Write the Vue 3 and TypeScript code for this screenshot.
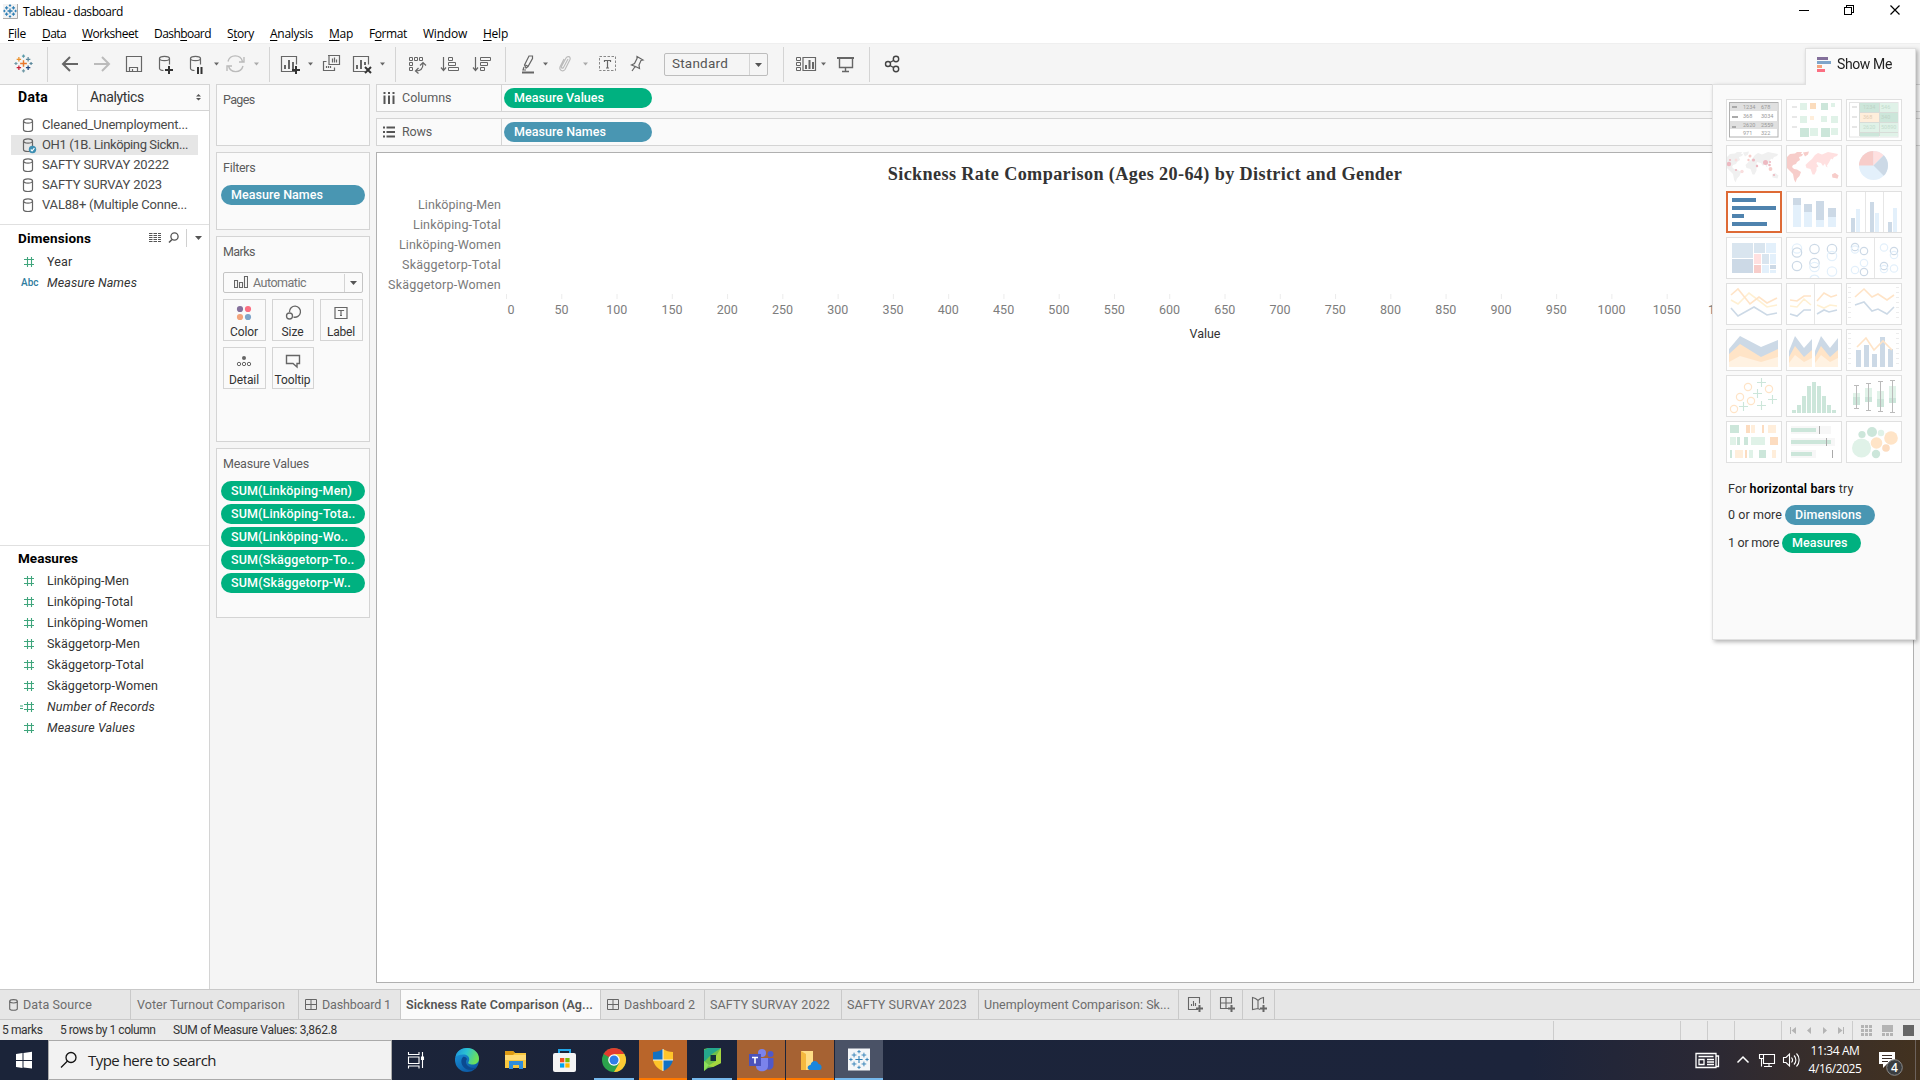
<script setup lang="ts">
type Sized = [string, number]

interface Tool {
  x: number
  w: number
  art: string
}

// Spreads the glyphs of a label so that it takes the given width.
const vFit = {
  mounted(el: HTMLElement, binding: { value: number }) {
    const n = (el.textContent ?? '').length
    const natural = el.getBoundingClientRect().width
    if (n > 1) el.style.letterSpacing = `${((binding.value - natural) / n).toFixed(3)}px`
  },
}

const menus: [string, string, string, number][] = [
  ['', 'F', 'ile', 18], ['', 'D', 'ata', 24], ['', 'W', 'orksheet', 56], ['Dash', 'b', 'oard', 57],
  ['S', 't', 'ory', 27], ['', 'A', 'nalysis', 43], ['', 'M', 'ap', 24], ['F', 'o', 'rmat', 38],
  ['Wi', 'n', 'dow', 44], ['', 'H', 'elp', 25],
]

const caret = (x: number, c = '#666') => `<path d="M${x} 62.500h5l-2.500 3z" fill="${c}"/>`
const plus = (x: number, y: number, c = '#333', s = 4) =>
  `<path d="M${x - s} ${y}h${2 * s}M${x} ${y - s}v${2 * s}" stroke="${c}" stroke-width="2" fill="none"/>`
const line = (d: string, c = '#666', w = 1.2) => `<path d="${d}" stroke="${c}" stroke-width="${w}" fill="none"/>`
const sep = (x: number) => `<path d="M${x + 0.5} 47v35" stroke="#d4d4d4"/>`
const cross = (x: number, y: number, s: number, c: string, w = 1.1) => line(`M${x - s} ${y}h${2 * s}M${x} ${y - s}v${2 * s}`, c, w)

function tableauMark(cx: number, cy: number, k: number, c: string[], w = 1.1) {
  return cross(cx, cy, 3.2 * k, c[0], w * 1.2) +
    cross(cx - 4.4 * k, cy - 4 * k, 2.1 * k, c[1], w) + cross(cx + 4.4 * k, cy - 4 * k, 2.1 * k, c[2], w) +
    cross(cx - 4.4 * k, cy + 4 * k, 2.1 * k, c[3], w) + cross(cx + 4.4 * k, cy + 4 * k, 2.1 * k, c[4], w) +
    cross(cx, cy - 7 * k, 1.5 * k, c[5], w) + cross(cx, cy + 7 * k, 1.5 * k, c[6], w) +
    cross(cx - 7.2 * k, cy, 1.5 * k, c[7], w) + cross(cx + 7.2 * k, cy, 1.5 * k, c[8], w)
}
const blueMark = Array(9).fill('#2f7fb5')
const colourMark = ['#e8762c', '#eb912c', '#5b879b', '#c72035', '#1f447e', '#5b9aa8', '#7099a6', '#7099a6', '#59879b']

const tools: Tool[] = [
  { x: 0, w: 48, art: tableauMark(23.5, 63.5, 1.05, colourMark, 1.2) + sep(47) },
  { x: 48, w: 38, art: line('M78 64H63M70 57l-7 7 7 7', '#666', 2) },
  { x: 86, w: 32, art: line('M94 64h15M102 57l7 7-7 7', '#bbb', 2) },
  { x: 118, w: 32, art: line('M126.500 56.500h15v15h-15zM129.500 71.500v-4h8v4M132.500 71v-2') },
  { x: 150, w: 32, art: line('M159.500 58.500v10c0 1 2 2 4 2M169.500 58.500v6') + '<ellipse cx="164.500" cy="58.500" rx="5" ry="2.200" fill="none" stroke="#666" stroke-width="1.200"/>' + plus(169, 70) },
  { x: 182, w: 40, art: line('M190.500 58.500v10c0 1 2 2 4 2M200.500 58.500v6') + '<ellipse cx="195.500" cy="58.500" rx="5" ry="2.200" fill="none" stroke="#666" stroke-width="1.200"/><path d="M197 67h2v7h-2zM200.500 67h2v7h-2z" fill="#333"/>' + caret(214) },
  { x: 222, w: 50, art: line('M228 61.500a7.500 7.500 0 0 1 14.500 0M243 66a7.500 7.500 0 0 1-14.500 0M244 57v5h-5M227 71v-5h5', '#bbb', 1.4) + caret(254, '#aaa') + sep(269) },
  { x: 272, w: 46, art: line('M295 71.500h-13.500v-15h15v8') + '<path d="M284 65h2v4h-2zM288 60h2v9h-2zM292 62h2v7h-2z" fill="#666"/>' + plus(296, 70) + caret(308) },
  { x: 318, w: 30, art: line('M328 55.500h11.500v9h-10.500v-9M326.500 61.500h-3v9h11v-3M332.500 58.500v4M334.500 57.500v5M336.500 59.500v3M326.500 68v-2M328.500 68v-2M330.500 68v-2') },
  { x: 348, w: 50, art: line('M365 71.500h-11.500v-15h15v8') + '<path d="M356 65h2v4h-2zM360 60h2v9h-2zM364 62h2v3h-2z" fill="#666"/>' + line('M365 67l6 6M371 67l-6 6', '#333', 2) + caret(380) + sep(395) },
  { x: 398, w: 36, art: line('M409.500 57.500h3v3h-3zM414.500 57.500h3v3h-3zM419.500 57.500h3v3h-3zM409.500 62.500h3v3h-3zM409.500 67.500h3v3h-3z', '#666', 1) + line('M416 71c4.500 0 7-2.500 7-7.500M420 65.500l3-3 3 3M418.500 68l-3 3 3 2.500') },
  { x: 434, w: 32, art: line('M443.500 57v13M441 67.500l2.500 3 2.500-3') + line('M448.500 57.500h4v3h-4zM448.500 62.500h7v3h-7zM448.500 67.500h10v3h-10z', '#666', 1) },
  { x: 466, w: 42, art: line('M475.500 57v13M473 67.500l2.500 3 2.500-3') + line('M480.500 57.500h10v3h-10zM480.500 62.500h7v3h-7zM480.500 67.500h4v3h-4z', '#666', 1) + sep(505) },
  { x: 508, w: 46, art: line('M522 72.500h12', '#666', 2) + line('M526 68l-1.500-3 4.500-9h3.500v2.500l-4.500 8zM524 67l-1 3h3M525.500 65l3 1.500') + caret(543) },
  { x: 554, w: 40, art: line('M568 59l-4.500 8.500c-1.500 1.500-2.500 0-2-1l4.500-8.500c1.500-2.500 5-1.500 4 1.500l-5 10c-2 2.500-6 1-5-2.500l4-8', '#bbb', 1.2) + caret(583, '#aaa') },
  { x: 594, w: 28, art: '<rect x="599.500" y="56.500" width="16" height="14" fill="none" stroke="#888" stroke-dasharray="2.500 1.500"/>' + line('M604.500 62v-1.500h6V62M607.500 60.500v7.500M606 68h3') },
  { x: 622, w: 42, art: line('M637 56.500l6 3.500-2 .5-2 4.500.5 3.500-3-1.500-5-2 3-1.500 2.500-5zM635.500 66l-3.500 5') },
]
const toolsRight: Tool[] = [
  { x: 768, w: 62, art: sep(783) + line('M796.500 57.500h4v3h-4zM796.500 62.500h4v3h-4zM796.500 67.500h4v3h-4z', '#666', 1) + line('M803 57.500h12.500v13H803z') + '<path d="M805 65h2v4h-2zM808.500 60h2v9h-2zM812 62h2v7h-2z" fill="#666"/>' + caret(821) },
  { x: 830, w: 42, art: line('M837 58h17', '#666', 2) + line('M839.500 58v9.500h13V58M845.500 67.500v4M842 71.500h7', '#666', 1.4) + sep(869) },
  { x: 872, w: 40, art: '<g fill="none" stroke="#444" stroke-width="1.400"><circle cx="888" cy="64" r="2.500"/><circle cx="896" cy="59" r="2.700"/><circle cx="896" cy="69" r="2.700"/><path d="M890 62.500l3.500-2M890 65.500l3.500 2"/></g>' },
]

const sources: Sized[] = [
  ['Cleaned_Unemployment...', 146], ['OH1 (1B. Linköping Sickn...', 146], ['SAFTY SURVAY 20222', 127],
  ['SAFTY SURVAY 2023', 120], ['VAL88+ (Multiple Conne...', 145],
]
const measures: [string, number, boolean][] = [
  ['Linköping-Men', 82, false], ['Linköping-Total', 86, false], ['Linköping-Women', 101, false],
  ['Skäggetorp-Men', 93, false], ['Skäggetorp-Total', 97, false], ['Skäggetorp-Women', 111, false],
  ['Number of Records', 108, true], ['Measure Values', 88, true],
]
const sums: Sized[] = [
  ['SUM(Linköping-Men)', 121], ['SUM(Linköping-Tota..', 124.5], ['SUM(Linköping-Wo..', 117],
  ['SUM(Skäggetorp-To..', 123.5], ['SUM(Skäggetorp-W..', 120],
]
const rowLabels: Sized[] = [
  ['Linköping-Men', 83], ['Linköping-Total', 88], ['Linköping-Women', 102], ['Skäggetorp-Total', 99], ['Skäggetorp-Women', 113],
]
const ticks = Array.from({ length: 23 }, (_, i) => ({ value: i * 50, x: 506.5 + i * 55.27 }))

const r = (x: number, y: number, w: number, h: number, c: string) => `<rect x="${x}" y="${y}" width="${w}" height="${h}" fill="${c}"/>`
const ring = (x: number, y: number, q: number, c: string) => `<circle cx="${x}" cy="${y}" r="${q}" fill="none" stroke="${c}" stroke-width="1.200"/>`
const dot = (x: number, y: number, q: number, c: string) => `<circle cx="${x}" cy="${y}" r="${q}" fill="${c}"/>`
const t = (x: number, y: number, s: string, c: string) => `<text x="${x}" y="${y}" font-size="5.500" font-family="Roboto, sans-serif" fill="${c}">${s}</text>`
const pl = (d: string, c: string) => line(d, c, 1.6)

const americas = 'M1 12l3-3 5-.5 2-1.500 5 0-1 2 2 0-1 2-3 1 1 3-3 2-1 2-3 1-1 2 2 2 3 .5 4 2.500-1.500 4-2.500 2.500-1.500 4-1.500-3-1-5.500-3-3-3-3-1-4-1.500-4-2.500 1zM17 7.500l6-1-1 3-3 2z'
const eurasia = 'M26 14l3-4 3-2 4 1.500 6-2.500 5 1 5 1-1 2-3 1-1.500 2.500-1.500-1-2 4-2 3 .5 2-1.500-1-1-3-2 2.500-2-3-4-1-.5 1.500 2 3-2 1 0 3-2 4-2 0-2-5.500-4-1-1-3 3-3zM46 29.500l3-1.500 3.500 2.500-1 3-5-1z'

const lb = '#e3f0fb', gb = '#ccd9e6', lg = '#e0f2e8', mg = '#cce6da', lo = '#ffeedb', mo = '#fcdcc0', pk = '#ffe0e0', rd = '#f7cdca', yl = '#fff0d2', or = '#ffe4c7'
const axisDashes = line('M2 4.500h3M2 9.500h3M2 14.500h3M2 19.500h3M2 24.500h3M2 29.500h3M2 34.500h3M50 4.500h3M50 9.500h3M50 14.500h3M50 19.500h3M50 24.500h3M50 29.500h3M50 34.500h3', '#ececec', 1)
const thumbs: string[] = [
  `<rect x="3.500" y="3.500" width="48.500" height="34.500" fill="#fff" stroke="#b0b0b0"/>` + r(4, 4, 47.500, 8, '#e0e0e0') + r(4, 22, 47.500, 8, '#e0e0e0') +
    r(6, 7, 5, 2, '#aaa') + r(6, 17, 6, 2, '#aaa') + r(6, 27, 4, 2, '#aaa') +
    t(17, 10, '1234', '#999') + t(35, 10, '678', '#999') + t(17, 19, '368', '#999') + t(35, 19, '3034', '#999') +
    t(17, 28, '2620', '#999') + t(35, 28, '2559', '#999') + t(17, 36, '971', '#999') + t(35, 36, '322', '#999'),
  r(6, 7, 5, 2, '#e8e8e8') + r(6, 17, 5, 2, '#e8e8e8') + r(6, 27, 5, 2, '#e8e8e8') + r(14, 4, 7, 7, lg) + r(24, 4, 6, 6, '#fbdcbd') + r(35, 4, 7, 7, mg) + r(45, 4, 4, 4, lg) +
    r(14, 17, 7, 7, lg) + r(24, 17, 4, 4, lo) + r(35, 17, 6, 6, lg) + r(45, 17, 7, 7, lg) + r(14, 29, 9, 9, mg) + r(24, 29, 8, 8, lg) + r(35, 29, 9, 9, mg) + r(45, 29, 7, 7, lg),
  '<rect x="3.500" y="3.500" width="48.500" height="34.500" fill="#fff" stroke="#e4e4e4"/>' + r(6, 7, 5, 2, '#e6e6e6') + r(6, 17, 5, 2, '#e6e6e6') + r(6, 27, 5, 2, '#e6e6e6') +
    r(14, 4, 19, 9, mg) + r(34, 4, 18, 9, lg) + r(14, 14, 19, 9, lo) + r(34, 14, 18, 9, mg) + r(14, 24, 19, 9, lg) + r(34, 24, 18, 9, lg) + r(14, 34, 19, 3.5, mg) + r(34, 34, 18, 3.5, lg) +
    line('M13.500 4v33M33.500 4v33M13.500 13.500H52M13.500 23.500H52M13.500 33.500H52', '#d8dcd8', 1) + t(17, 10, '1234', '#bfd3c6') + t(35, 10, '546', '#c4dccd') + t(17, 20, '368', '#e2cdb5') + t(35, 20, '340', '#bfd3c6') + t(17, 30, '2620', '#c4dccd') + t(35, 30, '50890', '#c4dccd'),
  `<g fill="#f0f0f0"><path d="${americas}"/><path d="${eurasia}"/></g>` + dot(3, 19, 2.2, '#edb9c1') + dot(10, 15, 1.5, '#f9dede') + dot(4, 15, 1.1, '#edb9c1') + dot(24, 11, 1.5, rd) + dot(27.5, 15, 1.6, '#edb9c1') + dot(22.5, 15, 1.2, rd) + dot(39.5, 17.5, 2.5, '#edb9c1') + dot(44, 17, 1.1, '#edb9c1') + dot(43.5, 20, 1.3, '#edb9c1') + dot(44.5, 24, 1.9, rd) + dot(31, 21, 1.2, '#edb9c1') + dot(16, 26.5, 1.7, '#f9dede') + dot(10, 25, 1.1, '#edb9c1') + dot(48, 30, 1.1, '#edb9c1'),
  `<path d="${americas}" fill="${rd}"/><path d="${eurasia}" fill="${pk}"/><path d="M46 29.500l3-1.500 3.500 2.500-1 3-5-1z" fill="${rd}"/>`,
  `<circle cx="27.500" cy="20.500" r="14.500" fill="${lb}"/><path d="M27.500 20.500H13a14.500 14.500 0 0 1 14.500-14.500z" fill="${rd}"/><path d="M27.500 20.500V6a14.500 14.500 0 0 1 10.250 4.250z" fill="${pk}"/><path d="M27.500 20.500l10.250-10.250a14.500 14.500 0 0 1 0 20.500z" fill="${gb}"/>`,
  r(6, 7, 24, 4, '#4f83ae') + r(6, 15, 44, 4, '#4f83ae') + r(6, 23, 12, 4, '#4f83ae') + r(6, 31, 35, 4, '#4f83ae'),
  r(7, 7, 8, 29, lb) + r(7, 7, 8, 7, gb) + r(18, 13, 8, 23, lb) + r(18, 13, 8, 8, gb) + r(30, 10, 8, 19, gb) + r(30, 29, 8, 7, lb) + r(42, 17, 8, 9, gb) + r(42, 26, 8, 10, lb),
  line('M19.500 0v41M37.500 0v41', '#e6e6e6', 1) + r(5, 27, 4, 14, gb) + r(10, 18, 4, 23, lb) + r(24, 11, 4, 30, gb) + r(29, 22, 4, 19, lb) + r(42, 31, 4, 10, gb) + r(47, 17, 4, 24, lb),
  r(6, 6, 21, 15, '#d9e5ef') + r(6, 22, 21, 14, gb) + r(28, 6, 11, 10, '#d9e5ef') + r(40, 6, 10, 10, lb) + r(28, 17, 7, 10, pk) + r(36, 17, 7, 10, '#d9e5ef') + r(44, 17, 6, 10, lb) + r(28, 28, 7, 8, rd) + r(36, 28, 7, 8, lb) + r(44, 28, 6, 4, gb) + r(44, 33, 6, 3, lb),
  ring(11, 11.5, 4.7, lb) + ring(11, 15.5, 4.7, gb) + ring(11, 29, 4.7, gb) + ring(28.5, 12, 4.7, gb) + ring(28.5, 26, 4.7, gb) + ring(28.5, 30, 4.7, lb) + line('M24 41a5 5 0 0 1 9 0', lb) + ring(46, 12, 4.7, gb) + ring(46, 19, 4.7, lb) + ring(46, 34.5, 4.7, lb),
  line('M28.500 0v41', '#e6e6e6', 1) + ring(9, 10, 3.7, gb) + ring(9, 12.5, 3.7, lb) + ring(18, 14, 3.7, gb) + ring(18, 26, 3.7, lb) + ring(9, 33, 3.7, lb) + ring(18, 35, 3.7, gb) + ring(38, 10.5, 3.7, lb) + ring(48, 14, 3.7, gb) + ring(48, 18, 3.7, lb) + ring(38, 29, 3.7, gb) + ring(38, 32, 3.7, lb) + ring(48, 31.5, 3.7, lb),
  pl('M5 17l7 4 11-11 18 14 10-2', yl) + pl('M5 12l7-6 12 15 9-7 8 6 10-5', or) + pl('M5 25l7 8 16-9 13 8 10-2', gb),
  line('M28.500 0v41', '#e6e6e6', 1) + pl('M4 23l7 1 7-8 7 6M31 22l7 3 6-3 7 1', yl) + pl('M4 17l7 1 7-5h7M31 18l7-8 7 4 6-2', or) + pl('M4 31l7 2 7-6h7M31 31l7-4 5 2 8-2', gb),
  axisDashes + pl('M9 14l9-8 8 8 6-3 9 6 7-5', or) + pl('M9 22l9-3 8 9 6-2 9 5 7-7', gb),
  `<path d="M3 20L14 7l21 11 17-7v27H3z" fill="${gb}"/><path d="M3 25l11-10 21 13 17-8v18H3z" fill="${or}"/><path d="M3 33l11-6 21 6 17-5v10H3z" fill="#fff2e2"/>`,
  `<path d="M3 22l6-15 9 12 8-9v28H3zM29 22l6-15 9 12 8-10v29H29z" fill="${gb}"/><path d="M3 28l6-11 9 11 8-7v17H3zM29 28l6-11 9 11 8-7v17H29z" fill="${or}"/><path d="M3 34l6-8 9 7 8-4v9H3zM29 34l6-8 9 7 8-4v9H29z" fill="#fff2e2"/>`,
  axisDashes + r(10, 21, 5, 17, gb) + r(18, 16, 5, 22, gb) + r(26, 25, 5, 13, gb) + r(34, 8, 5, 30, gb) + r(42, 20, 5, 18, gb) + pl('M11 18l9-9 8 12 9-9 9 9', or),
  ring(22, 12, 3.6, or) + ring(14, 22, 3.6, or) + ring(25, 26, 3.6, or) + ring(8, 34, 3.6, or) + ring(43, 14, 3.6, or) + cross(35.5, 7.5, 4.5, mg) + cross(31.5, 18.5, 4.5, mg) + cross(46.5, 24.5, 4.5, mg) + cross(35.5, 30.5, 4.5, mg) + cross(17.5, 31.500, 4.5, mg),
  [3, 8, 17, 27, 31, 27, 17, 8, 3].map((h, i) => r(6 + i * 5, 38 - h, 4, h, mg)).join(''),
  [[7, 18, 22, 30, 10, 33], [19, 13, 22, 27, 8, 35], [31, 16, 24, 32, 6, 36], [43, 11, 23, 28, 5, 37]].map(([x, a, b, c, u, v]) => r(x, a, 7, b - a, lg) + r(x, b, 7, c - b, mg) + line(`M${x + 3.5} ${u}v${v - u}M${x + 1} ${u + 0.5}h5M${x + 1} ${v + 0.5}h5`, '#bbb', 1)).join(''),
  r(4, 4, 9, 8, mg) + r(20, 4, 4, 8, mo) + r(25, 4, 4, 8, lo) + r(36, 4, 2, 8, mo) + r(42, 4, 8, 8, lo) + r(4, 16, 6, 8, lg) + r(11, 16, 3, 8, mg) + r(18, 16, 4, 8, mg) + r(25, 16, 14, 8, lg) + r(44, 16, 8, 8, mo) + r(4, 29, 2, 8, mg) + r(9, 29, 8, 8, lo) + r(19, 29, 2, 8, mo) + r(23, 29, 4, 8, lg) + r(33, 29, 7, 8, mg) + r(46, 29, 4, 8, lo),
  r(5, 5, 40, 8, '#f7f7f7') + r(5, 17, 44, 8, '#f7f7f7') + r(5, 29, 25, 8, '#f7f7f7') + r(5, 7, 25, 4, mg) + r(5, 19, 40, 4, mg) + r(5, 31, 21, 4, mg) + r(33, 5, 1, 8, '#aaa') + r(40, 17, 1, 8, '#aaa') + r(46, 29, 1, 8, '#aaa'),
  dot(15.5, 27, 9.5, '#e0f2e8') + dot(16, 13.5, 3.6, mg) + dot(26, 11, 5, mg) + dot(35, 12, 3.200, lg) + dot(45, 17, 6.8, or) + dot(30.500, 22, 5.8, or) + dot(40, 27, 3.8, mo) + dot(30, 33, 4.200, mg),
]

const sheets: { label: string; w: number; fit: number; icon: string; active?: boolean }[] = [
  { label: 'Data Source', w: 131, fit: 69, icon: 'db' },
  { label: 'Voter Turnout Comparison', w: 168, fit: 148, icon: '' },
  { label: 'Dashboard 1', w: 102, fit: 69, icon: 'grid' },
  { label: 'Sickness Rate Comparison (Ag...', w: 200, fit: 187, icon: '', active: true },
  { label: 'Dashboard 2', w: 104, fit: 71, icon: 'grid' },
  { label: 'SAFTY SURVAY 2022', w: 137, fit: 120, icon: '' },
  { label: 'SAFTY SURVAY 2023', w: 137, fit: 120, icon: '' },
  { label: 'Unemployment Comparison: Sk...', w: 200, fit: 186, icon: '' },
]
const newSheet = [
  line('M19 19.500h-9.500v-12h11v6M12.500 16v-2M14.500 16v-5M16.500 16v-3', '#666', 1.1) + plus(20.5, 18.5, '#666', 3.500),
  line('M17 18.500H9.500v-11h11v6M15 7.500v11M9.500 13h11', '#666', 1.1) + plus(20.5, 18.5, '#666', 3.500),
  line('M17 19.500l-2-1-5.500 1v-12l3 1 2.500 2 2.500-2 3-1v6M15 10v8', '#666', 1.1) + plus(20.500, 18.5, '#666', 3.500),
]
</script>

<template>
  <div class="app">
    <header class="title-bar">
      <svg class="app-icon" width="15" height="15" viewBox="0 0 15 15">
        <rect width="15" height="15" fill="#f2f2f2" /><path d="M0 14.500h14.500V0" fill="none" stroke="#aaa" />
        <g v-html="tableauMark(7, 7, 0.78, blueMark, 1.1)" />
      </svg>
      <span v-fit="100" class="app-title">Tableau - dasboard</span>
      <svg class="win-controls" width="130" height="20" viewBox="1790 0 130 20" fill="none" stroke="#000" shape-rendering="crispEdges">
        <path d="M1799 10.500h10M1844.500 7.500h7v7h-7zM1846.500 7V5.500h7v7H1852" />
        <path d="M1890.500 5.500l9 9M1899.500 5.500l-9 9" shape-rendering="auto" stroke-width="1.200" />
      </svg>
    </header>

    <nav class="menu-bar">
      <span v-for="m in menus" :key="m[1] + m[2]" v-fit="m[3]">{{ m[0] }}<u>{{ m[1] }}</u>{{ m[2] }}</span>
    </nav>

    <div class="toolbar">
      <svg v-for="tool in tools" :key="tool.x" :width="tool.w" height="40" :viewBox="`${tool.x} 44 ${tool.w} 40`" v-html="tool.art" />
      <div class="combo">
        <span v-fit="56">Standard</span>
        <svg width="18" height="21" viewBox="0 0 18 21"><path d="M.5 0v21" stroke="#d4d4d4" /><path d="M6 9h7l-3.500 4z" fill="#555" /></svg>
      </div>
      <svg v-for="tool in toolsRight" :key="tool.x" :width="tool.w" height="40" :viewBox="`${tool.x} 44 ${tool.w} 40`" v-html="tool.art" />
    </div>

    <main class="work">
      <aside class="side">
        <div class="side-tabs">
          <div class="side-tab current"><span v-fit="30">Data</span></div>
          <div class="side-tab other">
            <span v-fit="54">Analytics</span>
            <svg width="7" height="9" viewBox="0 0 7 9"><path d="M1 3.500h5L3.500 1zM1 5h5L3.500 7.500z" fill="#555" /></svg>
          </div>
        </div>
        <div class="sources">
          <div v-for="(s, i) in sources" :key="s[0]" class="source" :class="{ picked: i === 1 }">
            <svg width="16" height="18" viewBox="0 0 16 18" fill="none" stroke="#666" stroke-width="1.200">
              <ellipse cx="6" cy="5" rx="4.500" ry="2.200" />
              <path d="M1.500 5v8.500c0 1.200 2 2 4.500 2s4.500-.8 4.500-2V5" />
              <g v-if="i === 1" stroke="none"><circle cx="10.500" cy="13.500" r="3.700" fill="#3d8fb3" /><path d="M8.800 13.500l1.300 1.300 2.300-2.600" stroke="#fff" /></g>
            </svg>
            <span v-fit="s[1]">{{ s[0] }}</span>
          </div>
        </div>
        <section class="dimensions">
          <div class="heading">
            <span v-fit="73">Dimensions</span>
            <svg width="60" height="18" viewBox="0 0 60 18" fill="none" stroke="#555">
              <path d="M4 4.500h12M4 6.500h12M4 8.500h12M4 10.500h12M4 12.500h12" stroke-dasharray="3.500 1" />
              <circle cx="29.500" cy="7.500" r="3.600" stroke-width="1.300" /><path d="M27 10.500l-3 3" stroke-width="1.600" />
              <path d="M41.500 0v18" stroke="#d0d0d0" /><path d="M50 7h7l-3.500 4z" fill="#555" stroke="none" />
            </svg>
          </div>
          <div class="field">
            <svg width="20" height="12" viewBox="0 0 20 12"><path d="M7.500 1v10M11.500 1v10M4 3.500h10M4 8.500h10" stroke="#3fa57c" stroke-width="1.100" /></svg>
            <span v-fit="25.5">Year</span>
          </div>
          <div class="field">
            <span class="abc">Abc</span>
            <span v-fit="90" class="generated">Measure Names</span>
          </div>
        </section>
        <section class="measures">
          <div class="heading"><span v-fit="60">Measures</span></div>
          <div v-for="(m, i) in measures" :key="m[0]" class="field">
            <svg width="20" height="12" viewBox="0 0 20 12">
              <path d="M7.500 1v10M11.500 1v10M4 3.500h10M4 8.500h10" stroke="#3fa57c" stroke-width="1.100" />
              <path v-if="i === 6" d="M0 5h3M0 7.500h3" stroke="#3fa57c" />
            </svg>
            <span v-fit="m[1]" :class="{ generated: m[2] }">{{ m[0] }}</span>
          </div>
        </section>
      </aside>

      <div class="cards">
        <section class="card pages"><h2 v-fit="33.5">Pages</h2></section>
        <section class="card filters">
          <h2 v-fit="34.5">Filters</h2>
          <div class="pill blue"><span v-fit="92">Measure Names</span></div>
        </section>
        <section class="card marks">
          <h2 v-fit="34">Marks</h2>
          <div class="mark-type">
            <svg width="14" height="14" viewBox="0 0 14 14" fill="none" stroke="#666" stroke-width="1.100"><path d="M.5 4.500h3v7h-3zM5.500 6.500h3v5h-3zM10.500.5h3v11h-3z" /></svg>
            <span v-fit="53">Automatic</span>
            <svg width="18" height="18" viewBox="0 0 18 18"><path d="M.5 0v18" stroke="#d4d4d4" /><path d="M6 7h7l-3.500 4z" fill="#555" /></svg>
          </div>
          <div class="mark-grid">
            <div class="mark-btn">
              <svg width="20" height="18" viewBox="0 0 20 18"><circle cx="6" cy="6" r="3.100" fill="#84709b" /><circle cx="14" cy="6" r="3.100" fill="#fb6f82" /><circle cx="6" cy="14" r="3.100" fill="#f3a47c" /><circle cx="14" cy="14" r="3.100" fill="#7fa5c9" /></svg>
              <span v-fit="28">Color</span>
            </div>
            <div class="mark-btn">
              <svg width="20" height="18" viewBox="0 0 20 18" fill="none" stroke="#666" stroke-width="1.300"><path d="M6.500 9a5.500 5.500 0 1 1 4 5" /><circle cx="6.500" cy="13" r="3" /></svg>
              <span v-fit="22">Size</span>
            </div>
            <div class="mark-btn">
              <svg width="20" height="18" viewBox="0 0 20 18" fill="none" stroke="#666" stroke-width="1.200"><path d="M4 4.500h12v11H4zM7.500 8V7.500h5V8M10 7.500v5M9 12.500h2" /></svg>
              <span v-fit="28">Label</span>
            </div>
            <div class="mark-btn">
              <svg width="20" height="18" viewBox="0 0 20 18" fill="none" stroke="#666"><circle cx="10" cy="7" r="2" fill="#666" stroke="none" /><circle cx="5" cy="13" r="1.700" /><circle cx="10" cy="13" r="1.700" /><circle cx="15" cy="13" r="1.700" /></svg>
              <span v-fit="30">Detail</span>
            </div>
            <div class="mark-btn">
              <svg width="20" height="18" viewBox="0 0 20 18" fill="none" stroke="#666" stroke-width="1.400"><path d="M3.500 4.500h13v8H14v3.500l-4-3.500H3.500z" /></svg>
              <span v-fit="36">Tooltip</span>
            </div>
          </div>
        </section>
        <section class="card values">
          <h2 v-fit="88">Measure Values</h2>
          <div v-for="s in sums" :key="s[0]" class="pill green"><span v-fit="s[1]">{{ s[0] }}</span></div>
        </section>
      </div>

      <div class="stage">
        <div class="shelf">
          <div class="shelf-name">
            <svg width="12" height="12" viewBox="0 0 12 12" stroke="#555" stroke-width="2"><path d="M1.500 0v2M6 0v2M10.500 0v2M1.500 3.500V12M6 3.500V12M10.500 3.500V12" /></svg>
            <span v-fit="49.5">Columns</span>
          </div>
          <div class="pill green"><span v-fit="90">Measure Values</span></div>
        </div>
        <div class="shelf">
          <div class="shelf-name">
            <svg width="12" height="12" viewBox="0 0 12 12" stroke="#555" stroke-width="2"><path d="M0 1.500h2M0 6h2M0 10.500h2M3.500 1.500H12M3.500 6H12M3.500 10.500H12" /></svg>
            <span v-fit="30">Rows</span>
          </div>
          <div class="pill blue"><span v-fit="92">Measure Names</span></div>
        </div>
        <div class="view">
          <h1><span v-fit="514.5">Sickness Rate Comparison (Ages 20-64) by District and Gender</span></h1>
          <div class="row-labels">
            <div v-for="l in rowLabels" :key="l[0]"><span v-fit="l[1]">{{ l[0] }}</span></div>
          </div>
          <svg class="axis" width="1335" height="56" viewBox="377 292 1335 56">
            <g v-for="tk in ticks" :key="tk.value">
              <path :d="`M${tk.x} 294v5`" stroke="#ececec" />
              <text :x="tk.value ? tk.x - 0.3 : 511" y="314" text-anchor="middle">{{ tk.value }}</text>
            </g>
            <text class="axis-title" x="1189.500" y="338" textLength="31">Value</text>
          </svg>
        </div>
      </div>
    </main>

    <div class="sheet-tabs">
      <div v-for="s in sheets" :key="s.label" class="sheet" :class="[{ active: s.active }, s.icon]" :style="{ width: s.w + 'px' }">
        <svg v-if="s.icon === 'db'" width="9" height="12" viewBox="0 0 9 12" fill="none" stroke="#666" stroke-width="1.100"><ellipse cx="4.500" cy="2.300" rx="3.800" ry="1.700" /><path d="M.7 2.300v7.500c0 .9 1.600 1.500 3.800 1.500s3.800-.6 3.800-1.500V2.300" /></svg>
        <svg v-if="s.icon === 'grid'" width="12" height="12" viewBox="0 0 12 12" fill="none" stroke="#666"><path d="M.5.5h11v10H.5zM6 .5v10M.5 5.500h11" /></svg>
        <span v-fit="s.fit">{{ s.label }}</span>
      </div>
      <div v-for="(n, i) in newSheet" :key="i" class="sheet add"><svg width="31" height="29" viewBox="0 0 31 29" v-html="n" /></div>
    </div>

    <footer class="status">
      <span v-fit="40.5">5 marks</span>
      <span v-fit="95.5">5 rows by 1 column</span>
      <span v-fit="164">SUM of Measure Values: 3,862.8</span>
      <svg width="370" height="21" viewBox="1550 1019 370 21">
        <path d="M1553.500 1020v20M1680.500 1020v20M1707.500 1020v20M1734.500 1020v20M1781.500 1020v20M1852.500 1020v20" stroke="#ccc" />
        <g fill="#b4b4b4">
          <path d="M1790 1026h1v7h-1zM1796 1026v7l-4.500-3.500zM1811 1026v7l-4-3.500zM1823 1026v7l4-3.500zM1838 1026v7l4.500-3.500zM1843 1026h1v7h-1z" />
          <path d="M1861 1024h3v3h-3zM1865 1024h3v3h-3zM1869 1024h3v3h-3zM1861 1028h3v3h-3zM1865 1028h3v3h-3zM1869 1028h3v3h-3zM1861 1032h3v3h-3zM1865 1032h3v3h-3zM1869 1032h3v3h-3z" />
          <path d="M1882 1024h11v7h-11zM1882 1032h3v3h-3zM1886 1032h3v3h-3zM1890 1032h3v3h-3z" />
        </g>
        <path d="M1903 1024h11v11h-11z" fill="#666" />
      </svg>
    </footer>

    <div class="taskbar">
      <svg width="48" height="40" viewBox="0 1040 48 40"><path d="M16 1054l6.500-1v7H16zM23.500 1053l8.500-1.200v8.200h-8.500zM16 1061h6.500v7l-6.500-1zM23.500 1061h8.500v7.500l-8.500-1z" fill="#fff" /></svg>
      <div class="search">
        <svg width="18" height="18" viewBox="0 0 18 18" fill="none" stroke="#111" stroke-width="1.300"><circle cx="11" cy="6.500" r="5" /><path d="M7.500 10L1 16.500" /></svg>
        <span v-fit="128">Type here to search</span>
      </div>
      <svg width="508" height="40" viewBox="392 1040 508 40">
        <defs>
          <linearGradient id="edge-a" x1="0" y1="0" x2="1" y2=".3"><stop offset="0" stop-color="#1b8fdd" /><stop offset=".5" stop-color="#2bc3d2" /><stop offset="1" stop-color="#6be05a" /></linearGradient>
          <linearGradient id="edge-b" x1="0" y1="0" x2=".6" y2="1"><stop offset="0" stop-color="#1b9de2" /><stop offset="1" stop-color="#0c59a4" /></linearGradient>
        </defs>
        <g fill="none" stroke="#fff" stroke-width="1.100">
          <path d="M408.500 1052v2.500h10.500v-2.500M408.500 1057h10.500v6.500h-10.500zM408.500 1068.500v-2.500h10.500v2.500M422.500 1052v16" /><path d="M421.500 1057h2v2.500h-2z" fill="#fff" />
        </g>
        <g>
          <circle cx="467" cy="1060" r="12" fill="url(#edge-b)" />
          <path d="M455.500 1057c1-6 6-9 11.500-9 7 0 12 5 12 10.500 0 4-3 6-6.500 6-3 0-5-1-4-2.500 2-3.500 0-7-4-7.500-4-.4-7.500 1-9 2.500z" fill="url(#edge-a)" />
          <path d="M463 1057c-3 3-2 9 3 12 4 2 8 1 11-1.500-4 1-8 0-10-2.500-1.500-2-1.500-4 0-6-1-1.800-2.500-2.500-4-2z" fill="#0b4a90" />
        </g>
        <g>
          <path d="M505 1051h8l2 2h11v15h-21z" fill="#f8c73f" /><path d="M505 1051h8l2 2-2 2h-8z" fill="#dd9a13" /><path d="M505 1055h21v5h-21z" fill="#ffdb74" />
          <path d="M509 1061h14v8h-4v-4h-6v4h-4z" fill="#2f8ddb" />
        </g>
        <g>
          <path d="M559 1055v-5h11v5" fill="none" stroke="#22a7e8" stroke-width="2" /><rect x="553" y="1053" width="23" height="19" rx="2" fill="#f4f4f4" />
          <path d="M560 1058h4.300v4.300H560z" fill="#f25022" /><path d="M565.300 1058h4.300v4.300h-4.300z" fill="#7fba00" /><path d="M560 1063.300h4.300v4.300H560z" fill="#00a4ef" /><path d="M565.300 1063.300h4.300v4.300h-4.300z" fill="#ffb900" />
        </g>
        <g>
          <circle cx="614" cy="1060" r="12" fill="#2ba24c" />
          <path d="M614 1060l-10.400-6a12 12 0 0 1 20.800 0z" fill="#e33b2e" /><path d="M614 1054h10.400a12 12 0 0 1-10.400 18l5.200-9z" fill="#fcc934" />
          <circle cx="614" cy="1060" r="5.800" fill="#fff" /><circle cx="614" cy="1060" r="4.500" fill="#2f7de9" />
        </g>
        <path d="M639 1040h48v38h-48zM737 1040h48v38h-48zM786 1040h48v38h-48z" fill="#a66233" /><path d="M639 1040h48v38h-48z" fill="#b9652a" />
        <path d="M835 1040h48v38h-48z" fill="#4a5266" />
        <path d="M594 1078h40v2h-40zM692 1078h40v2h-40zM835 1078h48v2h-48z" fill="#76b9ed" />
        <path d="M639 1078h48v2h-48zM737 1078h48v2h-48zM786 1078h48v2h-48z" fill="#ff7900" />
        <g>
          <path d="M663 1049c-3 2-6 3-10 3v8h10z" fill="#1272c4" /><path d="M663 1049c3 2 6 3 10 3v8h-10z" fill="#ffc529" />
          <path d="M653 1060h10v11c-5-2-9-6-10-11z" fill="#ffc529" /><path d="M673 1060h-10v11c5-2 9-6 10-11z" fill="#1272c4" /><path d="M663 1049v22M653 1060h20" stroke="#f5f0e0" />
        </g>
        <g>
          <path d="M704 1049l4-1h13v15l-8 4-5 1-4 3z" fill="#6cc04a" /><path d="M708 1048h13l-9 6-8 8v-12z" fill="#25a78c" /><path d="M716 1056l5-8v15l-8 4-5-1 8-5z" fill="#a5d63f" /><path d="M710.500 1055h5.500v6h-5.500z" fill="#13303a" /><path d="M704 1071v-10l5 4z" fill="#8be05a" />
        </g>
        <g>
          <circle cx="762" cy="1053" r="4" fill="#7b83eb" /><circle cx="770.500" cy="1054" r="3" fill="#5059c9" /><path d="M765 1058h8.500v7c0 5-6 6-8.500 3z" fill="#5059c9" /><path d="M756 1058h12v8c0 7-12 7-12 0z" fill="#7b83eb" />
          <path d="M749 1054h12v12h-12z" fill="#4b53bc" />
          <path d="M752 1057.500h6M755 1057.500v6" stroke="#fff" stroke-width="1.600" fill="none" />
        </g>
        <g>
          <path d="M801 1051h12v19h-12z" fill="#ffdd85" /><path d="M801 1051l5 3v16h-5z" fill="#f5b93f" />
          <path d="M809.500 1070c-3-1-2-5 1-5 1-5 7-5 8-1 4 0 4 6 1 6z" fill="#1a86dc" />
        </g>
        <rect x="848" y="1048.500" width="22" height="22" fill="#f4f6f8" />
        <g v-html="tableauMark(859, 1059.500, 1.12, blueMark, 0.9)" />
      </svg>
      <svg class="tray" width="120" height="40" viewBox="1690 1040 120 40" fill="none" stroke="#fff" stroke-width="1.300">
        <path d="M1696 1053.500h20v14h-20zM1716 1056h2.500v10.500h-3" /><path d="M1699 1059.500h5v5h-5zM1698.500 1056.500h15M1707 1059.500h7M1707 1062h7M1707 1064.500h7" />
        <path d="M1737.500 1062.500l5.500-5.500 5.500 5.500" stroke-width="1.500" />
        <path d="M1763.500 1054.500h11v9h-11zM1769 1063.500v3M1764 1066.500h8M1759.500 1054.500h4v4h-4zM1761.500 1058.500v8" stroke-width="1.100" />
        <path d="M1783.500 1057.500h2.500l3.500-3.500v12l-3.500-3.500h-2.500z" stroke-width="1.100" /><path d="M1791.500 1057.500c1.300 1.500 1.300 3.500 0 5M1794 1055.500c2.500 2.500 2.500 6.500 0 9M1796.500 1053.500c3.500 3.500 3.500 9.500 0 13" stroke-width="1.100" />
      </svg>
      <div class="clock"><span v-fit="49">11:34 AM</span><span v-fit="53">4/16/2025</span></div>
      <svg width="58" height="40" viewBox="1862 1040 58 40">
        <path d="M1879 1052h16v12h-8l-4 4v-4h-4z" fill="#fff" /><path d="M1882 1055.500h10M1882 1058.500h10M1882 1061.500h6" stroke="#3c2f2a" />
        <circle cx="1894.500" cy="1067.500" r="7.800" fill="#3a3d40" stroke="#8a8a8a" /><text x="1894.500" y="1072" text-anchor="middle" fill="#fff" font-size="12" font-weight="600">4</text>
        <path d="M1915.500 1040v40" stroke="#6c625c" />
      </svg>
    </div>

    <div class="show-me">
      <div class="show-tab">
        <svg width="14" height="15" viewBox="0 0 14 15"><path d="M0 0h11v3H0z" fill="#84709b" /><path d="M0 4h14v3H0z" fill="#7fa5c9" /><path d="M0 8h5v3H0z" fill="#f3a47c" /><path d="M0 12h8v3H0z" fill="#fb6f82" /></svg>
        <span v-fit="55">Show Me</span>
      </div>
      <div class="show-body">
        <div class="thumbs">
          <div v-for="(art, i) in thumbs" :key="i" class="thumb" :class="{ chosen: i === 6 }"><svg width="54" height="40" viewBox="1 1 54 40" v-html="art" /></div>
        </div>
        <p><span v-fit="18.5">For</span> <b v-fit="86">horizontal bars</b> <span v-fit="15">try</span></p>
        <div class="hint"><span v-fit="54">0 or more</span><div class="pill blue dims"><span v-fit="66.5">Dimensions</span></div></div>
        <div class="hint second"><span v-fit="51">1 or more</span><div class="pill green meas"><span v-fit="55.5">Measures</span></div></div>
      </div>
    </div>
  </div>
</template>

<style>
body {
  margin: 0;
  overflow: hidden;
}
</style>

<style scoped>
.app {
  position: relative;
  display: flex;
  flex-direction: column;
  width: 1920px;
  height: 1080px;
  background: #f5f5f5;
  color: #333;
  font-family: Roboto, "Liberation Sans", sans-serif;
  font-size: 12.5px;
  white-space: nowrap;
  overflow: hidden;
}
.app * {
  box-sizing: border-box;
}
svg {
  display: block;
  flex: none;
}
h1,
h2,
p {
  margin: 0;
}
.title-bar {
  display: flex;
  height: 24px;
  background: #fff;
  color: #000;
  font: 12px/24px "Open Sans", sans-serif;
}
.app-icon {
  margin: 4px 5px 0 3px;
}
.win-controls {
  margin-left: auto;
}
.menu-bar {
  display: flex;
  gap: 16px;
  height: 19px;
  padding-left: 8px;
  background: #fff;
  color: #000;
  font: 12px/20px "Open Sans", sans-serif;
}
.menu-bar u {
  text-underline-offset: 2px;
}
.toolbar {
  display: flex;
  align-items: center;
  height: 41px;
  border-top: 1px solid #efefef;
}
.combo {
  display: flex;
  align-items: center;
  justify-content: space-between;
  width: 104px;
  height: 23px;
  padding-left: 7px;
  border: 1px solid #bdbdbd;
  border-radius: 2px;
  color: #555;
  font-size: 13.5px;
}
.combo span {
  line-height: 19px;
  padding-bottom: 2px;
}
.work {
  display: flex;
  height: 905px;
}
.side {
  display: flex;
  flex-direction: column;
  width: 210px;
  border-right: 1px solid #d4d4d4;
  background: #fff;
}
.side-tabs {
  display: flex;
  height: 27px;
  border-top: 1px solid #d4d4d4;
}
.side-tab {
  height: 26px;
  font-size: 14px;
  line-height: 24px;
}
.current {
  width: 77px;
  padding-left: 18px;
  color: #000;
  font-weight: 700;
}
.other {
  display: flex;
  flex: 1;
  align-items: center;
  justify-content: space-between;
  padding: 0 7px 1px 12px;
  border-bottom: 1px solid #d4d4d4;
  border-left: 1px solid #d4d4d4;
  background: #fafafa;
}
.sources {
  height: 113px;
  padding-top: 4px;
}
.source {
  display: flex;
  align-items: center;
  width: 187px;
  height: 20px;
  margin-left: 11px;
  padding-left: 11px;
  color: #4a4a4a;
  font-size: 13px;
}
.source span {
  margin-left: 4px;
  padding-bottom: 2px;
}
.picked {
  background: #e6e6e6;
}
.dimensions {
  height: 321px;
  border-top: 1px solid #e0e0e0;
}
.measures {
  flex: 1;
  border-top: 1px solid #e0e0e0;
}
.heading {
  display: flex;
  align-items: center;
  justify-content: space-between;
  height: 26px;
  padding: 0 4px 0 18px;
  color: #000;
  font-size: 13.5px;
  font-weight: 700;
}
.heading span {
  padding-bottom: 1px;
}
.measures .heading {
  height: 24px;
}
.field {
  display: flex;
  align-items: center;
  height: 21px;
  padding-left: 20px;
  font-size: 12.5px;
}
.field svg {
  width: 20px;
  margin-right: 7px;
}
.abc {
  width: 27px;
  padding-left: 1px;
  color: #2f7c9e;
  font-size: 10px;
  font-weight: 500;
}
.generated {
  font-style: italic;
}
.cards {
  display: flex;
  flex-direction: column;
  gap: 6px;
  width: 154px;
  margin-left: 6px;
}
.card {
  padding: 6px 4px;
  border: 1px solid #d4d4d4;
  background: #fafafa;
}
.card h2 {
  display: inline-block;
  padding-left: 2px;
  color: #5c5c5c;
  font-size: 12.5px;
  font-weight: 400;
  line-height: 18px;
}
.pages {
  height: 62px;
}
.filters {
  height: 78px;
}
.marks {
  height: 206px;
}
.values {
  height: 170px;
}
.pill {
  height: 20px;
  padding-left: 10px;
  border-radius: 10px;
  color: #fff;
  font-size: 12.5px;
  font-weight: 500;
  line-height: 20px;
}
.blue {
  background: #4996b2;
}
.green {
  background: #00b180;
}
.filters .pill {
  margin-top: 8px;
}
.values .pill {
  margin-bottom: 3px;
}
.values h2 {
  margin-bottom: 8px;
}
.mark-type {
  display: flex;
  align-items: center;
  height: 21px;
  margin: 11px 2px 6px;
  padding-left: 10px;
  border: 1px solid #c4c4c4;
  border-radius: 2px;
  color: #757575;
}
.mark-type span {
  margin-left: 5px;
}
.mark-type svg:last-child {
  margin-left: auto;
}
.mark-grid {
  display: grid;
  grid-template-columns: 43px 42px 43px;
  gap: 6px;
  padding-left: 2px;
}
.mark-btn {
  display: flex;
  flex-direction: column;
  align-items: center;
  height: 42px;
  padding: 3px 1px 0 0;
  border: 1px solid #d4d4d4;
  font-size: 12px;
  line-height: 22px;
}
.stage {
  display: flex;
  flex: 1;
  flex-direction: column;
  gap: 6px;
  margin-left: 6px;
}
.shelf {
  display: flex;
  align-items: center;
  height: 28px;
  border: 1px solid #d4d4d4;
  border-right: 0;
  background: #fafafa;
}
.shelf-name {
  display: flex;
  align-items: center;
  width: 125px;
  height: 26px;
  padding-left: 6px;
  border-right: 1px solid #d4d4d4;
  color: #5c5c5c;
}
.shelf-name span {
  margin-left: 7px;
  padding-bottom: 1px;
}
.shelf .pill {
  width: 148px;
  margin-left: 2px;
}
.view {
  width: 1538px;
  height: 831px;
  border: 1px solid #b0b0b0;
  background: #fff;
}
h1 {
  height: 42px;
  padding-top: 9px;
  color: #333;
  font: bold 18.2px/25px "Liberation Serif", serif;
  text-align: center;
}
.row-labels {
  width: 124px;
  height: 97px;
  color: #7a7a7a;
  text-align: right;
  line-height: 20px;
}
.axis text {
  fill: #7d7d7d;
  font-size: 12.5px;
}
.axis .axis-title {
  fill: #333;
}
.sheet-tabs {
  display: flex;
  height: 31px;
  border-top: 1px solid #c9c9c9;
  border-bottom: 1px solid #c9c9c9;
  background: #e6e6e6;
}
.sheet {
  display: flex;
  align-items: center;
  padding-left: 6px;
  border-right: 1px solid #c9c9c9;
  color: #6c6c6c;
  font-size: 12.5px;
  line-height: 30px;
}
.sheet.active {
  padding-left: 5px;
  background: #fafafa;
  color: #555;
  font-weight: 600;
}
.sheet:nth-child(n + 6) {
  padding-left: 5px;
}
.sheet.db {
  padding-left: 9px;
}
.sheet svg {
  margin-right: 5px;
}
.sheet.add {
  width: 32px;
  padding: 0;
}
.sheet.add svg {
  margin: 0;
}
.status {
  display: flex;
  gap: 17.5px;
  height: 20px;
  padding-left: 2px;
  background: #ebebeb;
  font-size: 12px;
  line-height: 20px;
}
.status svg {
  margin-left: auto;
}
.taskbar {
  display: flex;
  height: 40px;
  background: linear-gradient(90deg, #1b2439 0, #1c243b 1530px, #2a2835 1700px, #3b2f28 1840px, #43321f 1920px);
  font-family: "Open Sans", sans-serif;
}
.search {
  display: flex;
  align-items: center;
  width: 344px;
  padding-left: 11px;
  border: 1px solid #aaa;
  background: #f2f2f2;
  color: #222;
  font-size: 15px;
}
.search span {
  margin-left: 10px;
}
.tray {
  margin-left: auto;
}
.clock {
  display: flex;
  flex-direction: column;
  align-items: center;
  width: 52px;
  padding: 2px 2px 0 0;
  color: #fff;
  font-size: 12px;
  line-height: 18px;
}
.show-me {
  position: absolute;
  top: 48px;
  left: 1712px;
  width: 204px;
  filter: drop-shadow(2px 2px 2px rgba(0, 0, 0, 0.3));
}
.show-tab {
  position: relative;
  z-index: 1;
  display: flex;
  align-items: center;
  width: 111px;
  height: 37px;
  margin-left: auto;
  padding: 0 0 6px 11px;
  border: 1px solid #e0e0e0;
  border-bottom: 0;
  background: #fafafa;
  color: #222;
  font-size: 14px;
}
.show-tab span {
  margin-left: 6px;
  padding-bottom: 1px;
}
.show-body {
  height: 556px;
  margin-top: -1px;
  padding: 14px 13px;
  border: 1px solid #e0e0e0;
  background: #fafafa;
}
.thumbs {
  display: grid;
  grid-template-columns: repeat(3, 56px);
  gap: 4px;
}
.thumb {
  height: 42px;
  border: 1px solid #e0e0e0;
  background: #fff;
}
.thumb.chosen {
  border: 2px solid #de6a35;
}
.chosen svg {
  margin: -1px;
}
.show-body p {
  margin: 16px 0 6px 2px;
  line-height: 20px;
}
.show-body b {
  color: #000;
  font-weight: 600;
}
.hint {
  display: flex;
  margin-left: 2px;
  line-height: 20px;
}
.hint.second {
  margin-top: 8px;
}
.dims {
  width: 90px;
  margin-left: 3px;
}
.meas {
  width: 79px;
  margin-left: 3px;
}
</style>
